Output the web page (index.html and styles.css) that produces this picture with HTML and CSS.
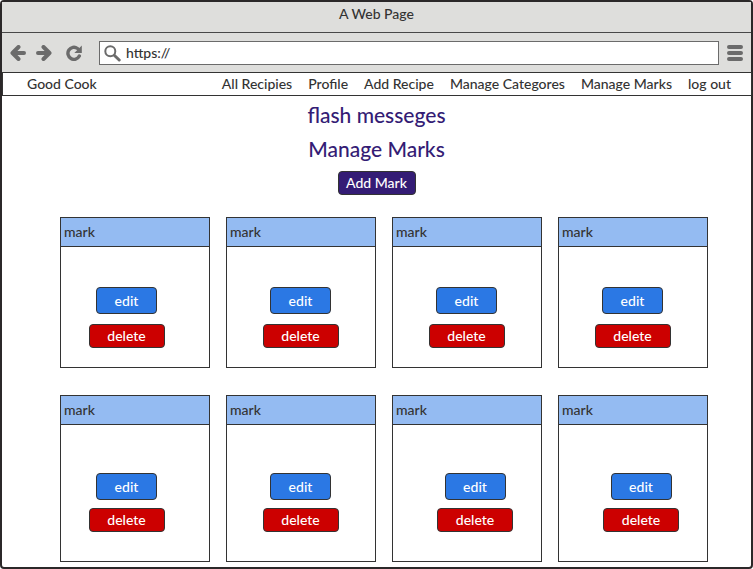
FILE: index.html
```html
<!DOCTYPE html>
<html lang="en">
<head>
<meta charset="utf-8">
<meta name="viewport" content="width=device-width, initial-scale=1">
<title>A Web Page</title>
<link rel="stylesheet" href="styles.css">
</head>
<body>
<div class="window">
  <div class="titlebar">A Web Page</div>
  <div class="toolbar">
    <button class="tool" type="button" aria-label="Back">
      <svg width="16" height="16" viewBox="0 0 16 16"><path d="M8.500 2 2.500 8l6 6M3 8h11" fill="none" stroke="currentColor" stroke-width="4" stroke-linecap="round" stroke-linejoin="round"/></svg>
    </button>
    <button class="tool" type="button" aria-label="Forward">
      <svg width="16" height="16" viewBox="0 0 16 16"><path d="m7.500 2 6 6-6 6M13 8H2" fill="none" stroke="currentColor" stroke-width="4" stroke-linecap="round" stroke-linejoin="round"/></svg>
    </button>
    <button class="tool tool-reload" type="button" aria-label="Reload">
      <svg width="18" height="16" viewBox="0 0 18 16"><path d="M14.300 11A6 6 0 1 1 12.500 3.500" fill="none" stroke="currentColor" stroke-width="3.400" stroke-linecap="round"/><path d="M16.800.5v7.500H9.300z" fill="currentColor"/></svg>
    </button>
    <label class="address">
      <svg width="17" height="17" viewBox="0 0 17 17" aria-hidden="true"><circle cx="6.300" cy="6.300" r="5" fill="none" stroke="currentColor" stroke-width="2"/><path d="m10.500 10.500 4.700 4.500" stroke="currentColor" stroke-width="3" stroke-linecap="round"/></svg>
      <input class="url" type="text" value="https://" aria-label="Address">
    </label>
    <button class="tool" type="button" aria-label="Menu">
      <svg width="16" height="16" viewBox="0 0 16 16"><path d="M2 2h12M2 8h12M2 14h12" stroke="currentColor" stroke-width="4" stroke-linecap="round"/></svg>
    </button>
  </div>
  <nav class="nav">
    <a class="brand" href="#">Good Cook</a>
    <a href="#">All Recipies</a>
    <a href="#">Profile</a>
    <a href="#">Add Recipe</a>
    <a href="#">Manage Categores</a>
    <a href="#">Manage Marks</a>
    <a href="#">log out</a>
  </nav>
  <main class="page">
    <p class="heading">flash messeges</p>
    <h1 class="heading">Manage Marks</h1>
    <button class="btn btn-add" type="button">Add Mark</button>
    <div class="cards">
      <section class="card card-left"><h2>mark</h2><div class="actions"><button class="btn btn-edit" type="button">edit</button><button class="btn btn-delete" type="button">delete</button></div></section>
      <section class="card"><h2>mark</h2><div class="actions"><button class="btn btn-edit" type="button">edit</button><button class="btn btn-delete" type="button">delete</button></div></section>
      <section class="card"><h2>mark</h2><div class="actions"><button class="btn btn-edit" type="button">edit</button><button class="btn btn-delete" type="button">delete</button></div></section>
      <section class="card"><h2>mark</h2><div class="actions"><button class="btn btn-edit" type="button">edit</button><button class="btn btn-delete" type="button">delete</button></div></section>
      <section class="card card-tall card-left"><h2>mark</h2><div class="actions"><button class="btn btn-edit" type="button">edit</button><button class="btn btn-delete" type="button">delete</button></div></section>
      <section class="card card-tall"><h2>mark</h2><div class="actions"><button class="btn btn-edit" type="button">edit</button><button class="btn btn-delete" type="button">delete</button></div></section>
      <section class="card card-tall card-right"><h2>mark</h2><div class="actions"><button class="btn btn-edit" type="button">edit</button><button class="btn btn-delete" type="button">delete</button></div></section>
      <section class="card card-tall card-right"><h2>mark</h2><div class="actions"><button class="btn btn-edit" type="button">edit</button><button class="btn btn-delete" type="button">delete</button></div></section>
    </div>
  </main>
</div>
</body>
</html>
```
FILE: styles.css
```css
* {
  box-sizing: border-box;
}

body {
  margin: 0;
  background: #fff;
  color: #333;
  font: 500 14px/16px Lato, "Liberation Sans", sans-serif;
}

button,
input {
  font: inherit;
}

.window {
  min-height: 100vh;
  border: 2px solid #2b2829;
  border-radius: 4px;
}

.titlebar {
  padding: 4px 0 10px;
  border-bottom: 1px solid #484848;
  background: #dededc;
  text-align: center;
}

.toolbar {
  display: flex;
  align-items: center;
  gap: 8px;
  padding: 8px 8px 7px;
  background: #dededc;
  color: #6b6b6b;
}

.tool {
  display: flex;
  padding: 0;
  border: 0;
  background: none;
  color: inherit;
}

.tool + .tool {
  margin-left: 2px;
}

.tool + .tool-reload {
  margin-left: 5px;
}

.tool-reload {
  margin-right: 8px;
}

.address {
  display: flex;
  flex: 1;
  align-items: center;
  gap: 5px;
  height: 24px;
  padding-left: 4px;
  border: 1px solid #6b6b6b;
  background: #fff;
}

.url {
  flex: 1;
  min-width: 0;
  padding: 0;
  border: 0;
  outline: 0;
  background: none;
  color: #333;
}

.nav {
  display: flex;
  gap: 16px;
  margin-right: -1px;
  padding: 3px 20px 3px 24px;
  border: 1px solid #333;
  background: #fff;
  white-space: nowrap;
}

.nav a {
  color: inherit;
  text-decoration: none;
}

.nav .brand {
  margin-right: auto;
}

.page {
  display: flex;
  flex-direction: column;
  align-items: center;
  padding: 6px 0 5px;
}

.heading {
  margin: 0 0 8px;
  color: #341c75;
  font-size: 21px;
  font-weight: 500;
  line-height: 26px;
}

.btn {
  padding: 0;
  border: 1px solid #333;
  border-radius: 4px;
  color: #fff;
}

.btn-add {
  width: 78px;
  height: 24px;
  margin-top: 1px;
  background: #341c75;
}

.cards {
  display: grid;
  grid-template-columns: repeat(4, 1fr);
  gap: 27px 16px;
  align-self: stretch;
  margin: 22px 43px 0 58px;
}

.card {
  border: 1px solid #333;
}

.card h2 {
  margin: 0;
  padding: 6px 3px;
  border-bottom: 1px solid #333;
  background: #94bbf2;
  font-size: 14px;
  font-weight: 500;
  line-height: 16px;
}

.actions {
  display: flex;
  flex-direction: column;
  align-items: center;
  gap: 10px;
  padding: 40px 1px 19px 0;
}

.card-tall .actions {
  gap: 8px;
  padding-top: 48px;
  padding-bottom: 29px;
}

.card-left .actions {
  padding-right: 17px;
}

.card-right .actions {
  padding-right: 0;
  padding-left: 16px;
}

.btn-edit {
  width: 61px;
  height: 27px;
  background: #2b78e4;
}

.btn-delete {
  width: 76px;
  height: 24px;
  background: #c00;
}
```
